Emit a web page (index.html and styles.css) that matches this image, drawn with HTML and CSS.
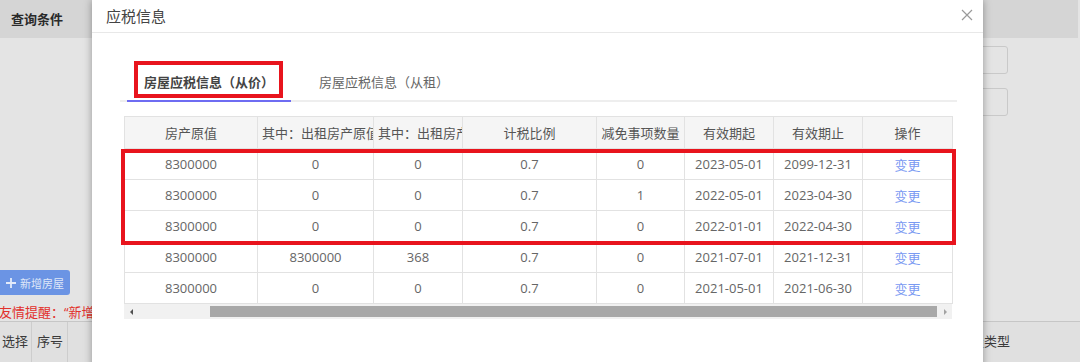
FILE: index.html
```html
<!DOCTYPE html>
<html lang="zh-CN">
<head>
    <meta charset="UTF-8">
    <meta name="viewport" content="width=device-width, initial-scale=1.0">
    <title>应税信息</title>
    <link rel="stylesheet" href="styles.css">
</head>
<body>
    <!-- 底层页面（被遮罩） -->
    <div class="page">
        <div class="query-bar">查询条件</div>
        <div class="query-body">
            <div class="field"></div>
            <div class="field"></div>
        </div>
        <div class="toolbar">
            <button class="add-btn" type="button">
                <svg class="plus" width="10" height="10" viewBox="0 0 10 10">
                    <path d="M5 0 V10 M0 5 H10" stroke="#e3eafa" stroke-width="1.8" fill="none"/>
                </svg>新增房屋</button>
        </div>
        <p class="tip">友情提醒<span class="fw">：</span>“新增房屋”后请及时完善应税信息</p>
        <div class="list-head">
            <div class="list-cell cell-select">选择</div>
            <div class="list-cell cell-no">序号</div>
            <div class="list-cell cell-fill"></div>
            <div class="list-cell cell-type">房屋类型</div>
        </div>
    </div>

    <!-- 弹窗 -->
    <div class="dialog">
        <div class="dialog-head">
            <span class="dialog-title">应税信息</span>
            <svg class="dialog-close" width="12" height="12" viewBox="0 0 12 12">
                <path d="M1 1 L11 11 M11 1 L1 11" stroke="#9a9a9a" stroke-width="1.2" fill="none"/>
            </svg>
        </div>
        <div class="dialog-body">
            <div class="tabs">
                <div class="tab active">房屋应税信息<span class="fw fw-open">（</span>从价<span class="fw">）</span></div>
                <div class="tab">房屋应税信息<span class="fw fw-open">（</span>从租<span class="fw">）</span></div>
            </div>
            <div class="grid">
                <table class="tax-table">
                    <colgroup>
                        <col style="width:133px">
                        <col style="width:116px">
                        <col style="width:89px">
                        <col style="width:134px">
                        <col style="width:88px">
                        <col style="width:89px">
                        <col style="width:89px">
                        <col style="width:90px">
                    </colgroup>
                    <thead>
                        <tr>
                            <th>房产原值</th>
                            <th class="th-long">其中<span class="fw">：</span>出租房产原值</th>
                            <th class="th-long">其中<span class="fw">：</span>出租房产原值</th>
                            <th>计税比例</th>
                            <th>减免事项数量</th>
                            <th>有效期起</th>
                            <th>有效期止</th>
                            <th>操作</th>
                        </tr>
                    </thead>
                    <tbody>
                        <tr>
                            <td>8300000</td><td>0</td><td>0</td><td>0.7</td><td>0</td>
                            <td>2023-05-01</td><td>2099-12-31</td><td><a class="op" href="#">变更</a></td>
                        </tr>
                        <tr>
                            <td>8300000</td><td>0</td><td>0</td><td>0.7</td><td>1</td>
                            <td>2022-05-01</td><td>2023-04-30</td><td><a class="op" href="#">变更</a></td>
                        </tr>
                        <tr>
                            <td>8300000</td><td>0</td><td>0</td><td>0.7</td><td>0</td>
                            <td>2022-01-01</td><td>2022-04-30</td><td><a class="op" href="#">变更</a></td>
                        </tr>
                        <tr>
                            <td>8300000</td><td>8300000</td><td>368</td><td>0.7</td><td>0</td>
                            <td>2021-07-01</td><td>2021-12-31</td><td><a class="op" href="#">变更</a></td>
                        </tr>
                        <tr>
                            <td>8300000</td><td>0</td><td>0</td><td>0.7</td><td>0</td>
                            <td>2021-05-01</td><td>2021-06-30</td><td><a class="op" href="#">变更</a></td>
                        </tr>
                    </tbody>
                </table>
                <div class="hscroll">
                    <span class="arrow arrow-left"></span>
                    <div class="track"><div class="thumb"></div></div>
                    <span class="arrow arrow-right"></span>
                </div>
            </div>
        </div>
        <!-- 标注红框 -->
        <div class="mark mark-tab"></div>
        <div class="mark mark-rows"></div>
    </div>
</body>
</html>
```

FILE: styles.css
```css
* {
    box-sizing: border-box;
}

html, body {
    margin: 0;
    height: 100%;
    overflow: hidden;
}

body {
    position: relative;
    background-color: #e4e4e4;
    font-family: "Open Sans", "Noto Sans CJK SC", sans-serif;
    font-size: 13px;
    color: #3a3a3a;
}

/* 全角标点占满一个字宽 */
.fw {
    display: inline-block;
    width: 1em;
    text-align: left;
}

.fw-open {
    text-align: right;
}

/* ---- 底层页面 ---- */
.page {
    width: 1080px;
}

.query-bar {
    width: 1078px;
    height: 38px;
    line-height: 38px;
    padding-left: 11px;
    background-color: #d5d5d5;
    font-weight: bold;
    color: #2a2a2a;
}

.query-body {
    display: flex;
    flex-direction: column;
    align-items: flex-end;
    gap: 14px;
    padding-top: 8px;
    padding-right: 72px;
}

.field {
    width: 300px;
    height: 28px;
    border: 1px solid #c9c9c9;
    border-radius: 3px;
}

.toolbar {
    margin-top: 154px;
}

.add-btn {
    display: flex;
    align-items: center;
    width: 74px;
    height: 25px;
    margin-left: -4px;
    padding: 0 0 0 10px;
    border: none;
    border-radius: 3px;
    background-color: #6b94e4;
    color: #dfe7f8;
    font-family: "Open Sans", "Noto Sans CJK SC", sans-serif;
    font-size: 11px;
    white-space: nowrap;
}

.plus {
    margin-right: 4px;
    flex-shrink: 0;
}

.tip {
    margin: 0;
    height: 26px;
    line-height: 34px;
    margin-left: -1px;
    color: #e2302c;
    white-space: nowrap;
}

.list-head {
    display: flex;
    height: 41px;
    border-top: 1px solid #c6c6c6;
    background-color: #e0e0e0;
}

.list-cell {
    line-height: 38px;
    border-right: 1px solid #cdcdcd;
}

.cell-select {
    width: 32px;
    padding-left: 2px;
}

.cell-no {
    width: 36px;
    padding-left: 5px;
}

.cell-fill {
    flex: 1;
}

.cell-type {
    width: 134px;
    padding-left: 12px;
    border-right: none;
}

/* ---- 弹窗 ---- */
.dialog {
    position: absolute;
    left: 92px;
    top: 0;
    width: 891px;
    height: 380px;
    background-color: #fff;
    box-shadow: 0 0 8px rgba(0, 0, 0, 0.35);
}

.dialog-head {
    display: flex;
    justify-content: space-between;
    align-items: center;
    height: 33px;
    padding: 0 10px 1px 14px;
    border-bottom: 1px solid #e8e8e8;
}

.dialog-title {
    font-size: 15px;
    color: #444;
}

.dialog-close {
    margin-top: -1px;
}

.dialog-body {
    padding: 33px 26px 0 28px;
}

.tabs {
    display: flex;
    height: 36px;
    border-bottom: 2px solid #eeeeee;
}

.tab {
    height: 36px;
    line-height: 33px;
    padding: 0 17px;
    color: #666;
    white-space: nowrap;
}

.tab:first-child {
    margin-left: 7px;
}

.tab + .tab {
    margin-left: 11px;
}

.tab.active {
    font-weight: bold;
    color: #444;
    border-bottom: 2px solid #6e6cf2;
}

.grid {
    width: 828px;
    margin: 14px 0 0 4px;
}

.tax-table {
    width: 828px;
    table-layout: fixed;
    border-collapse: collapse;
    border: 1px solid #e6e6e6;
}

.tax-table th,
.tax-table td {
    padding: 0 4px;
    border: 1px solid #e2e2e2;
    text-align: center;
    white-space: nowrap;
    overflow: hidden;
}

.tax-table th {
    height: 32px;
    background-color: #f5f5f5;
    font-weight: normal;
    color: #555;
}

.tax-table th.th-long {
    text-align: left;
}

.tax-table td {
    height: 31px;
    color: #666;
}

.op {
    color: #7a9af2;
    text-decoration: none;
}

.hscroll {
    display: flex;
    align-items: center;
    height: 15px;
    background-color: #f1f1f1;
}

.arrow {
    width: 15px;
    height: 15px;
    display: flex;
    align-items: center;
    justify-content: center;
}

.arrow::before {
    content: "";
    border-top: 3px solid transparent;
    border-bottom: 3px solid transparent;
}

.arrow-left::before {
    border-right: 3px solid #505050;
    margin-left: -1px;
}

.arrow-right::before {
    border-left: 3px solid #a3a3a3;
    margin-left: 1px;
}

.track {
    flex: 1;
    height: 15px;
    padding: 2px 0 2px 71px;
}

.thumb {
    height: 11px;
    background-color: #a8a8a8;
}

/* 红色标注框 */
.mark {
    position: absolute;
    border: 4px solid #e8141d;
}

.mark-tab {
    left: 42px;
    top: 61px;
    width: 149px;
    height: 37px;
}

.mark-rows {
    left: 29px;
    top: 149px;
    width: 835px;
    height: 96px;
}
```
